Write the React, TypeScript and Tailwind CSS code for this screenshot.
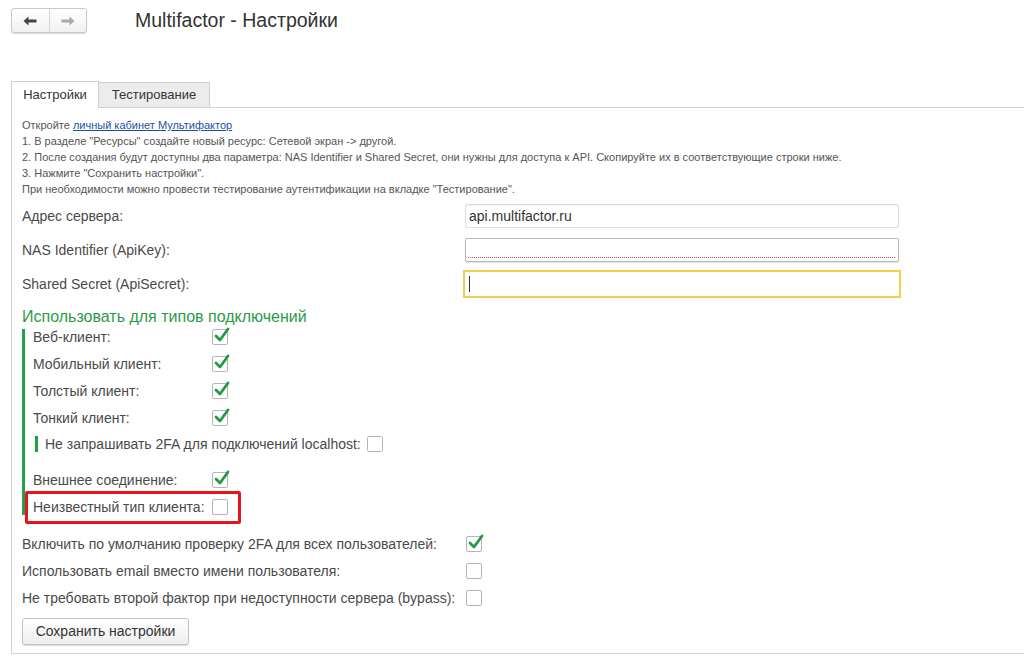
import type { ReactNode } from "react";

function Check({ checked }: { checked?: boolean }) {
	return (
		<span className="relative inline-flex w-[16px] h-[16px] shrink-0 border border-[#b5b5b5] rounded-[2px] bg-white">
			{checked && (
				<svg
					className="absolute left-[1px] -top-[3px] w-[16px] h-[16px]"
					viewBox="0 0 16 16"
					aria-hidden="true"
				>
					<path
						d="M2 9 L6 13 L14 2"
						fill="none"
						stroke="#1f9a45"
						strokeWidth={2.8}
						strokeLinecap="round"
						strokeLinejoin="round"
					/>
				</svg>
			)}
		</span>
	);
}

function Row({
	label,
	width,
	checked,
	className = "",
	children,
}: {
	label: string;
	width: string;
	checked?: boolean;
	className?: string;
	children?: ReactNode;
}) {
	return (
		<div className={`relative flex items-center h-[16px] ${className}`}>
			<span className={`${width} shrink-0 leading-none`}>{label}</span>
			<Check checked={checked} />
			{children}
		</div>
	);
}

export default function App() {
	return (
		<div className="w-[1024px] h-[658px] overflow-hidden bg-white text-[#4a4a4a] font-['Liberation_Sans',Arial,sans-serif]">
			{/* Header */}
			<div className="flex items-center pt-[8px] pl-[11px]">
				<div className="flex w-[76px] h-[25px] border border-[#c8c8c8] rounded-[3px] bg-gradient-to-b from-white to-[#f1f1f1] shadow-[0_1px_1px_rgba(0,0,0,0.15)]">
					<div className="flex-1 flex items-center justify-center border-r border-[#d6d6d6]">
						<svg className="w-[14px] h-[10px]" viewBox="0 0 14 10" aria-hidden="true">
							<path d="M0.5 5 L5.5 0.5 L5.5 3.5 L13.5 3.5 L13.5 6.5 L5.5 6.5 L5.5 9.5 Z" fill="#444" />
						</svg>
					</div>
					<div className="flex-1 flex items-center justify-center">
						<svg className="w-[14px] h-[10px]" viewBox="0 0 14 10" aria-hidden="true">
							<path d="M13.5 5 L8.5 0.5 L8.5 3.5 L0.5 3.5 L0.5 6.5 L8.5 6.5 L8.5 9.5 Z" fill="#a9a9a9" />
						</svg>
					</div>
				</div>
				<h1 className="ml-[48px] text-[19.5px] text-[#333] leading-none">
					Multifactor - Настройки
				</h1>
			</div>

			{/* Tabs */}
			<div className="flex items-end mt-[48px] ml-[11px] h-[27px]">
				<div className="relative z-10 w-[88px] h-[27px] border border-b-0 border-[#cfcfcf] bg-white flex items-center justify-center text-[13px] text-[#333]">
					Настройки
				</div>
				<div className="w-[111px] h-[26px] border border-l-0 border-[#cfcfcf] bg-[#ececec] flex items-center justify-center text-[13px] text-[#333]">
					Тестирование
				</div>
			</div>

			{/* Panel */}
			<div className="ml-[11px] -mt-px h-[547px] border-l border-t border-b border-[#d2d2d2] pl-[10px] pt-[9px]">
				<div className="text-[11px] leading-[16px] text-[#555]">
					<p>
						Откройте{" "}
						<span className="text-[#1f4fa0] underline">личный кабинет Мультифактор</span>
					</p>
					<p>1. В разделе "Ресурсы" создайте новый ресурс: Сетевой экран -&gt; другой.</p>
					<p>
						2. После создания будут доступны два параметра: NAS Identifier и Shared Secret, они нужны для
						доступа к API. Скопируйте их в соответствующие строки ниже.
					</p>
					<p>3. Нажмите "Сохранить настройки".</p>
					<p>При необходимости можно провести тестирование аутентификации на вкладке "Тестирование".</p>
				</div>

				<div className="text-[14px]">
					<div className="flex items-center mt-[7px] h-[24px]">
						<span className="w-[443px] shrink-0">Адрес сервера:</span>
						<div className="w-[434px] h-[24px] border border-[#dcdcdc] rounded-[2px] shadow-[inset_0_1px_1px_rgba(0,0,0,0.05)] flex items-center px-[3px] text-[#333]">
							api.multifactor.ru
						</div>
					</div>
					<div className="flex items-center mt-[10px] h-[24px]">
						<span className="w-[443px] shrink-0">NAS Identifier (ApiKey):</span>
						<div className="w-[434px] h-[24px] border border-[#b9b9b9] rounded-[2px] shadow-[0_1px_1px_rgba(0,0,0,0.12)] flex items-end px-[2px] pb-[3px]">
							<div className="w-full h-px bg-[repeating-linear-gradient(90deg,#d65050_0_1px,transparent_1px_2px)]" />
						</div>
					</div>
					<div className="flex items-center mt-[8px] h-[28px]">
						<span className="w-[441px] shrink-0">Shared Secret (ApiSecret):</span>
						<div className="w-[438px] h-[28px] border-2 border-[#f0cf4a] flex items-center pl-[4px]">
							<div className="w-px h-[16px] bg-[#333]" />
						</div>
					</div>

					<h2 className="mt-[10px] text-[16px] leading-[18px] text-[#2b9a48]">
						Использовать для типов подключений
					</h2>

					<div className="mt-[3px] border-l-[3px] border-[#23a049] pl-[8px] h-[186px]">
						<Row label="Веб-клиент:" width="w-[179px]" checked />
						<Row label="Мобильный клиент:" width="w-[179px]" checked className="mt-[11px]" />
						<Row label="Толстый клиент:" width="w-[179px]" checked className="mt-[11px]" />
						<Row label="Тонкий клиент:" width="w-[179px]" checked className="mt-[11px]" />
						<div className="flex items-center h-[16px] mt-[10px] ml-[2px]">
							<span className="w-[3px] h-[16px] bg-[#23a049] shrink-0" />
							<span className="ml-[7px] mr-[6px] leading-none">
								Не запрашивать 2FA для подключений localhost:
							</span>
							<Check />
						</div>
						<Row label="Внешнее соединение:" width="w-[179px]" checked className="mt-[20px]" />
						<Row label="Неизвестный тип клиента:" width="w-[179px]" className="mt-[11px]">
							<span className="absolute -left-[8px] -top-[8px] w-[216px] h-[33px] border-[3px] border-[#e8141b] rounded-[2px]" />
						</Row>
					</div>

					<Row
						label="Включить по умолчанию проверку 2FA для всех пользователей:"
						width="w-[444px]"
						checked
						className="mt-[21px]"
					/>
					<Row
						label="Использовать email вместо имени пользователя:"
						width="w-[444px]"
						className="mt-[11px]"
					/>
					<Row
						label="Не требовать второй фактор при недоступности сервера (bypass):"
						width="w-[444px]"
						className="mt-[11px]"
					/>

					<button
						type="button"
						className="mt-[12px] w-[167px] h-[27px] border border-[#c4c4c4] rounded-[3px] bg-gradient-to-b from-white to-[#eeeeee] shadow-[0_1px_1px_rgba(0,0,0,0.15)] text-[14px] text-[#333]"
					>
						Сохранить настройки
					</button>
				</div>
			</div>
		</div>
	);
}
